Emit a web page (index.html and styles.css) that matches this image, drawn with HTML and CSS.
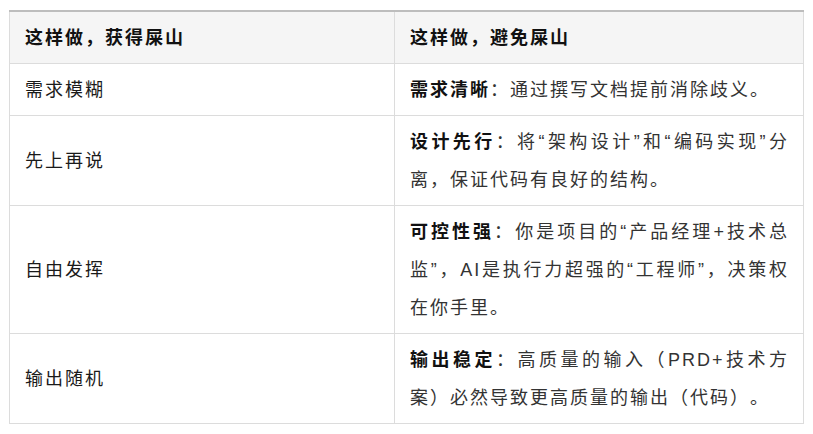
FILE: index.html
```html
<!DOCTYPE html>
<html lang="zh-CN">
<head>
<meta charset="utf-8">
<title>对比</title>
<link rel="stylesheet" href="styles.css">
</head>
<body>
<div class="page">
<table class="compare">
  <colgroup><col class="col-left"><col class="col-right"></colgroup>
  <thead>
    <tr><th>这样做，获得屎山</th><th>这样做，避免屎山</th></tr>
  </thead>
  <tbody>
    <tr><td class="bad">需求模糊</td><td class="good"><strong>需求清晰</strong>：通过撰写文档提前消除歧义。</td></tr>
    <tr><td class="bad">先上再说</td><td class="good"><strong>设计先行</strong>：将“架构设计”和“编码实现”分离，保证代码有良好的结构。</td></tr>
    <tr><td class="bad">自由发挥</td><td class="good"><strong>可控性强</strong>：你是项目的“产品经理+技术总监”，AI是执行力超强的“工程师”，决策权在你手里。</td></tr>
    <tr><td class="bad">输出随机</td><td class="good"><strong>输出稳定</strong>：高质量的输入（PRD+技术方案）必然导致更高质量的输出（代码）。</td></tr>
  </tbody>
</table>
</div>
</body>
</html>
```
FILE: styles.css
```css
html, body {
  margin: 0;
  padding: 0;
  background: #ffffff;
}
.page {
  padding: 10px 10px 0 9px;
  font-family: "Liberation Sans", "Noto Sans CJK SC", sans-serif;
  font-size: 18px;
  letter-spacing: 2px;
  color: #222;
  text-spacing-trim: space-all;
}
.compare {
  width: 794px;
  border-collapse: collapse;
  table-layout: fixed;
  border-top: 2px solid #bdbdbd;
}
.col-left { width: 385px; }
.col-right { width: 409px; }
.compare th,
.compare td {
  border: 1px solid #dcdcdc;
  padding: 7px 14px 6px 15px;
  line-height: 38px;
  text-align: left;
  vertical-align: middle;
}
.compare thead th {
  border-top: 2px solid #bdbdbd;
  background: #f5f5f5;
  font-weight: bold;
  color: #111;
}
.compare td.bad {
  color: #1a1a1a;
}
.compare td.good {
  color: #333;
  text-align: justify;
}
.compare td.good strong {
  color: #111;
  font-weight: bold;
}
```
